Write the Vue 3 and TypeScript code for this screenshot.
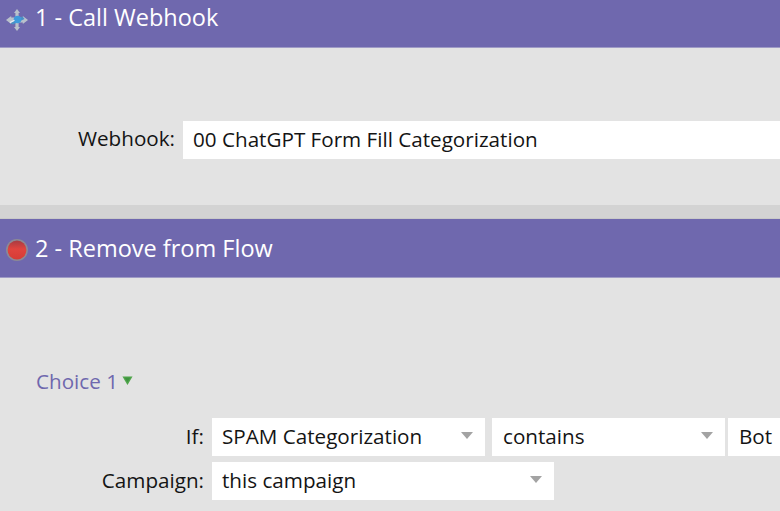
<script setup lang="ts">
interface Field {
  label: string
  value: string
  width: number
}

const ifFields: Field[] = [
  { label: 'If:', value: 'SPAM Categorization', width: 273 },
  { label: '', value: 'contains', width: 233 },
]
</script>

<template>
  <div class="flow">
    <section class="step step-first">
      <header class="step-head">
        <svg class="step-icon" width="24" height="24" viewBox="0 0 24 24">
          <path d="M12 1 15 5H13.6V9.4L17.8 9.6V8L23 12 17.8 16V14.4H13.6V19H15L12 23 9 19H10.4V14.6L6.2 14.4V16L1 12 6.2 8V9.6H10.4V5H9Z" fill="#b9c1cb" />
          <path d="M5 15 17.5 8.4 19.5 11 8 16.4Z" fill="#4a8fc4" />
          <circle cx="12.5" cy="11.5" r="3.8" fill="#3d9bdc" />
          <path d="M5 14.6 9.5 12.2" stroke="#e8eef4" stroke-width="1.2" />
        </svg>
        <span>1 - Call Webhook</span>
      </header>
      <div class="webhook-body">
        <div class="row">
          <label class="label webhook-label">Webhook:</label>
          <div class="box webhook-box">00 ChatGPT Form Fill Categorization</div>
        </div>
      </div>
    </section>

    <div class="divider"></div>

    <section class="step">
      <header class="step-head second-head">
        <svg class="step-icon" width="24" height="26" viewBox="0 0 24 26">
          <defs>
            <linearGradient id="stopGrad" x1="0" y1="0" x2="0" y2="1">
              <stop offset="0" stop-color="#a83c42" />
              <stop offset="0.45" stop-color="#e0443e" />
              <stop offset="1" stop-color="#d63c36" />
            </linearGradient>
          </defs>
          <circle cx="12" cy="15" r="11" fill="#8d8a94" />
          <circle cx="12" cy="15" r="9.4" fill="url(#stopGrad)" />
        </svg>
        <span>2 - Remove from Flow</span>
      </header>
      <div class="choice-body">
        <div class="choice-title">
          Choice 1
          <svg width="11" height="11" viewBox="0 0 12 12">
            <path d="M0.5 1.5H11.5L6 11Z" fill="#4fa54a" />
            <path d="M3 3H9L6 8Z" fill="#3f9440" />
          </svg>
        </div>
        <div class="row if-row">
          <template v-for="(f, i) in ifFields" :key="i">
            <label v-if="f.label" class="label choice-label">{{ f.label }}</label>
            <div class="box select" :style="{ width: f.width + 'px' }">
              {{ f.value }}
              <i class="caret"></i>
            </div>
          </template>
          <div class="box bot-box">Bot</div>
        </div>
        <div class="row campaign-row">
          <label class="label choice-label">Campaign:</label>
          <div class="box select campaign-select">
            this campaign
            <i class="caret"></i>
          </div>
        </div>
      </div>
    </section>
  </div>
</template>

<style>
html,
body {
  margin: 0;
  overflow: hidden;
}
</style>

<style scoped>
.flow {
  width: 780px;
  height: 511px;
  overflow: hidden;
  background: #e3e3e3;
  font-family: "Open Sans", "Noto Sans", sans-serif;
  font-size: 20.65px;
  color: #141414;
}
.step-head {
  display: flex;
  align-items: center;
  gap: 6px;
  padding-left: 5px;
  background: #6f68ae;
  color: #fff;
  font-size: 23.5px;
  border-bottom: 1px solid #9f9bc6;
  box-sizing: border-box;
}
.step-first .step-head {
  height: 48px;
  align-items: flex-start;
  line-height: 35px;
}
.step-first .step-icon {
  margin-top: 8px;
}
.second-head {
  height: 59px;
}
.webhook-body {
  box-sizing: border-box;
  height: 157px;
  padding-top: 73px;
}
.divider {
  height: 14px;
  box-sizing: border-box;
  background: #d3d3d3;
  border-bottom: 1px solid #c9c9c9;
}
.row {
  display: flex;
  align-items: flex-start;
}
.label {
  text-align: right;
  flex: none;
}
.webhook-label {
  width: 175px;
  margin-right: 8px;
  line-height: 34px;
}
.choice-label {
  width: 204px;
  margin-right: 8px;
  line-height: 36px;
}
.box {
  box-sizing: border-box;
  height: 38px;
  line-height: 37px;
  background: #fff;
  padding-left: 10px;
  white-space: nowrap;
  flex: none;
  overflow: hidden;
  position: relative;
}
.webhook-box {
  width: 597px;
}
.select + .select {
  margin-left: 7px;
  padding-left: 11px;
}
.bot-box {
  width: 52px;
  margin-left: 3px;
  padding-left: 11px;
}
.campaign-select {
  width: 342px;
}
.caret {
  position: absolute;
  right: 12px;
  top: 14px;
  width: 0;
  height: 0;
  border-left: 6.5px solid transparent;
  border-right: 6.5px solid transparent;
  border-top: 7px solid #a3a3a3;
}
.choice-body {
  padding-top: 89px;
}
.choice-title {
  display: flex;
  align-items: center;
  gap: 4px;
  margin-left: 36px;
  height: 27px;
  color: #6f68ae;
}
.if-row {
  margin-top: 24px;
}
.campaign-row {
  margin-top: 6px;
}
</style>
